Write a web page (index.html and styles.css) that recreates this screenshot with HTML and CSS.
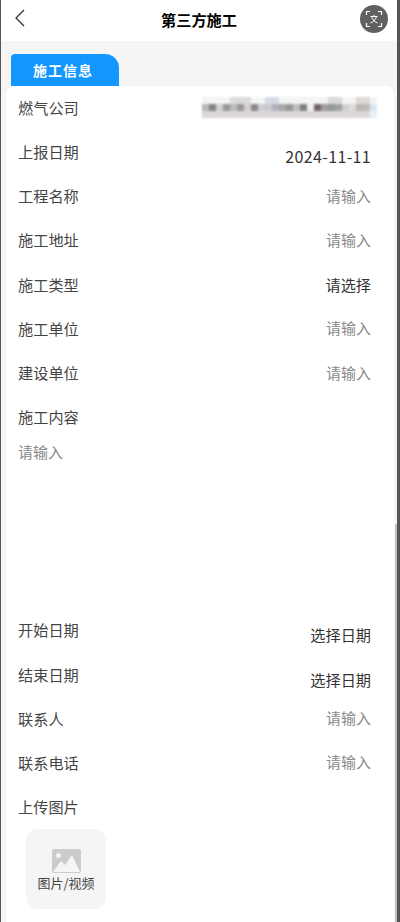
FILE: index.html
```html
<!DOCTYPE html>
<html>
  <head>
    <meta charset="utf-8" />
    <meta name="viewport" content="width=device-width, initial-scale=1.0" />
    <title>第三方施工</title>
    <link rel="stylesheet" href="styles.css">
  </head>
  <body>
    <div class="page">
      <div class="navbar">
        <svg class="back" width="12" height="18" viewBox="0 0 12 18">
          <path d="M10 1 L2 9 L10 17" fill="none" stroke="#333" stroke-width="1.300" />
        </svg>
        <div class="nav-title">第三方施工</div>
        <div class="scan">
          <svg width="18" height="18" viewBox="0 0 18 18">
            <path d="M1.500 5V1.500H5M13 1.500h3.500V5M16.500 13v3.500H13M5 16.500H1.500V13" fill="none" stroke="#fff" stroke-width="1.200" />
            <path d="M5.500 6.500h7M9 4.800v1.700M6.500 6.500c1 3.500 3.500 5.500 6 6.500M11.500 6.500c-1 3.500-3.500 5.500-6 6.500" fill="none" stroke="#fff" stroke-width="1" />
          </svg>
        </div>
      </div>

      <div class="tab-bar">
        <div class="tab">施工信息</div>
      </div>

      <div class="card">
        <div class="row row-company">
          <span class="label">燃气公司</span>
          <svg class="mosaic" width="175" height="21" viewBox="0 0 25 3" preserveAspectRatio="none" shape-rendering="crispEdges">
            <rect width="25" height="3" fill="#f4f4f4" />
            <rect x="0" y="1" width="1" height="1" fill="#bdb6b8" />
            <rect x="1" y="1" width="1" height="1" fill="#838183" />
            <rect x="2" y="1" width="1" height="1" fill="#d0d0d0" />
            <rect x="3" y="1" width="1" height="1" fill="#969899" />
            <rect x="4" y="1" width="1" height="1" fill="#bcbcbc" />
            <rect x="5" y="1" width="1" height="1" fill="#9b9898" />
            <rect x="6" y="1" width="1" height="1" fill="#d2d0d0" />
            <rect x="7" y="1" width="1" height="1" fill="#8c878c" />
            <rect x="8" y="1" width="1" height="1" fill="#cbced0" />
            <rect x="9" y="1" width="1" height="1" fill="#c8ccd2" />
            <rect x="10" y="1" width="1" height="1" fill="#afb2b9" />
            <rect x="11" y="1" width="1" height="1" fill="#a8a6a6" />
            <rect x="12" y="1" width="1" height="1" fill="#989696" />
            <rect x="13" y="1" width="1" height="1" fill="#bebebe" />
            <rect x="14" y="1" width="1" height="1" fill="#827f81" />
            <rect x="15" y="1" width="1" height="1" fill="#f2f0ee" />
            <rect x="16" y="1" width="1" height="1" fill="#70666b" />
            <rect x="17" y="1" width="1" height="1" fill="#a09c9a" />
            <rect x="18" y="1" width="1" height="1" fill="#939899" />
            <rect x="19" y="1" width="1" height="1" fill="#9ea3a3" />
            <rect x="20" y="1" width="1" height="1" fill="#d0d0d0" />
            <rect x="21" y="1" width="1" height="1" fill="#dcdcdc" />
            <rect x="22" y="1" width="1" height="1" fill="#bab6b0" />
            <rect x="23" y="1" width="1" height="1" fill="#bfbcb7" />
            <rect x="24" y="1" width="1" height="1" fill="#d8e8f2" />
            <rect x="4" y="0" width="3" height="1" fill="#dedada" />
            <rect x="9" y="0" width="2" height="1" fill="#d6dbe1" />
            <rect x="18" y="0" width="2" height="1" fill="#d6dadd" />
            <rect x="22" y="0" width="2" height="1" fill="#dedad5" />
            <rect x="0" y="2" width="25" height="1" fill="#dbd8d7" />
            <rect x="24" y="2" width="1" height="1" fill="#e6f0f7" />
          </svg>
        </div>
        <div class="row row-date">
          <span class="label">上报日期</span>
          <span class="value date-num">2024-11-11</span>
        </div>
        <div class="row">
          <span class="label">工程名称</span>
          <span class="hint">请输入</span>
        </div>
        <div class="row">
          <span class="label">施工地址</span>
          <span class="hint">请输入</span>
        </div>
        <div class="row">
          <span class="label">施工类型</span>
          <span class="value">请选择</span>
        </div>
        <div class="row">
          <span class="label">施工单位</span>
          <span class="hint">请输入</span>
        </div>
        <div class="row">
          <span class="label">建设单位</span>
          <span class="hint">请输入</span>
        </div>
        <div class="row">
          <span class="label">施工内容</span>
        </div>
        <div class="textarea">请输入</div>
        <div class="row row-date">
          <span class="label">开始日期</span>
          <span class="value">选择日期</span>
        </div>
        <div class="row row-date">
          <span class="label">结束日期</span>
          <span class="value">选择日期</span>
        </div>
        <div class="row">
          <span class="label">联系人</span>
          <span class="hint">请输入</span>
        </div>
        <div class="row">
          <span class="label">联系电话</span>
          <span class="hint">请输入</span>
        </div>
        <div class="row">
          <span class="label">上传图片</span>
        </div>
        <div class="upload">
          <svg width="29" height="24" viewBox="0 0 29 24">
            <rect width="29" height="24" rx="2" fill="#cccccc" />
            <circle cx="6.500" cy="6.500" r="2.500" fill="#f5f5f5" />
            <path d="M1 23 L9 12 L13 16 L20 6 L28 23 Z" fill="#f5f5f5" />
          </svg>
          <span class="upload-text">图片/视频</span>
        </div>
      </div>
      <div class="scrollbar"></div>
    </div>
  </body>
</html>
```

FILE: styles.css
```css
html,
body {
  margin: 0;
  padding: 0;
  height: 100%;
  overflow: hidden;
  background: #555;
}
.page {
  position: relative;
  width: 396px;
  height: 922px;
  margin-left: 1px;
  background: #f5f5f5;
  font-family: "Noto Sans CJK SC", "Liberation Sans", sans-serif;
  overflow: hidden;
}
.navbar {
  height: 41px;
  background: #fff;
  display: flex;
  align-items: center;
  justify-content: center;
  position: relative;
}
.back {
  position: absolute;
  left: 13px;
  top: 9px;
}
.nav-title {
  font-size: 15.200px;
  font-weight: bold;
  color: #000;
  margin-top: -4px;
}
.scan {
  position: absolute;
  left: 359px;
  top: 5px;
  width: 28px;
  height: 28px;
  border-radius: 50%;
  background: #606060;
  display: flex;
  align-items: center;
  justify-content: center;
}
.tab-bar {
  height: 45px;
  display: flex;
  align-items: flex-end;
  padding-left: 10px;
}
.tab {
  width: 108px;
  height: 32px;
  box-sizing: border-box;
  padding-right: 4px;
  background: #1296ff;
  border-radius: 4px 14px 0 0;
  color: #fff;
  font-size: 14px;
  font-weight: bold;
  letter-spacing: 1px;
  text-align: center;
  line-height: 32px;
}
.card {
  background: #fff;
  border-radius: 8px 8px 0 0;
  margin: 0 3px 0 5px;
  padding: 0 23px 0 12px;
  height: 840px;
}
.row {
  height: 44.200px;
  display: flex;
  align-items: center;
  justify-content: space-between;
  font-size: 15.200px;
}
.row-company {
  height: 43px;
}
.row-company .label {
  margin-top: -2px;
}
.row-date .value {
  margin-top: 10px;
}
.label {
  color: #444;
}
.value {
  color: #333;
}
.date-num {
  font-size: 16px;
  letter-spacing: 0.350px;
}
.hint {
  color: #8a8a8a;
  font-size: 15px;
}
.mosaic {
  margin-right: -6px;
  filter: blur(0.8px);
}
.textarea {
  height: 169px;
  padding-top: 3px;
  font-size: 15px;
  color: #8a8a8a;
  box-sizing: border-box;
}
.upload {
  width: 80px;
  height: 80px;
  box-sizing: border-box;
  padding-top: 20px;
  margin: 1px 0 0 8px;
  border-radius: 12px;
  background: #f5f5f5;
  display: flex;
  flex-direction: column;
  align-items: center;
}
.upload-text {
  font-size: 13px;
  color: #444;
}
.scrollbar {
  position: absolute;
  right: 0;
  top: 524px;
  width: 2px;
  height: 398px;
  background: #c4c4c4;
}
```
